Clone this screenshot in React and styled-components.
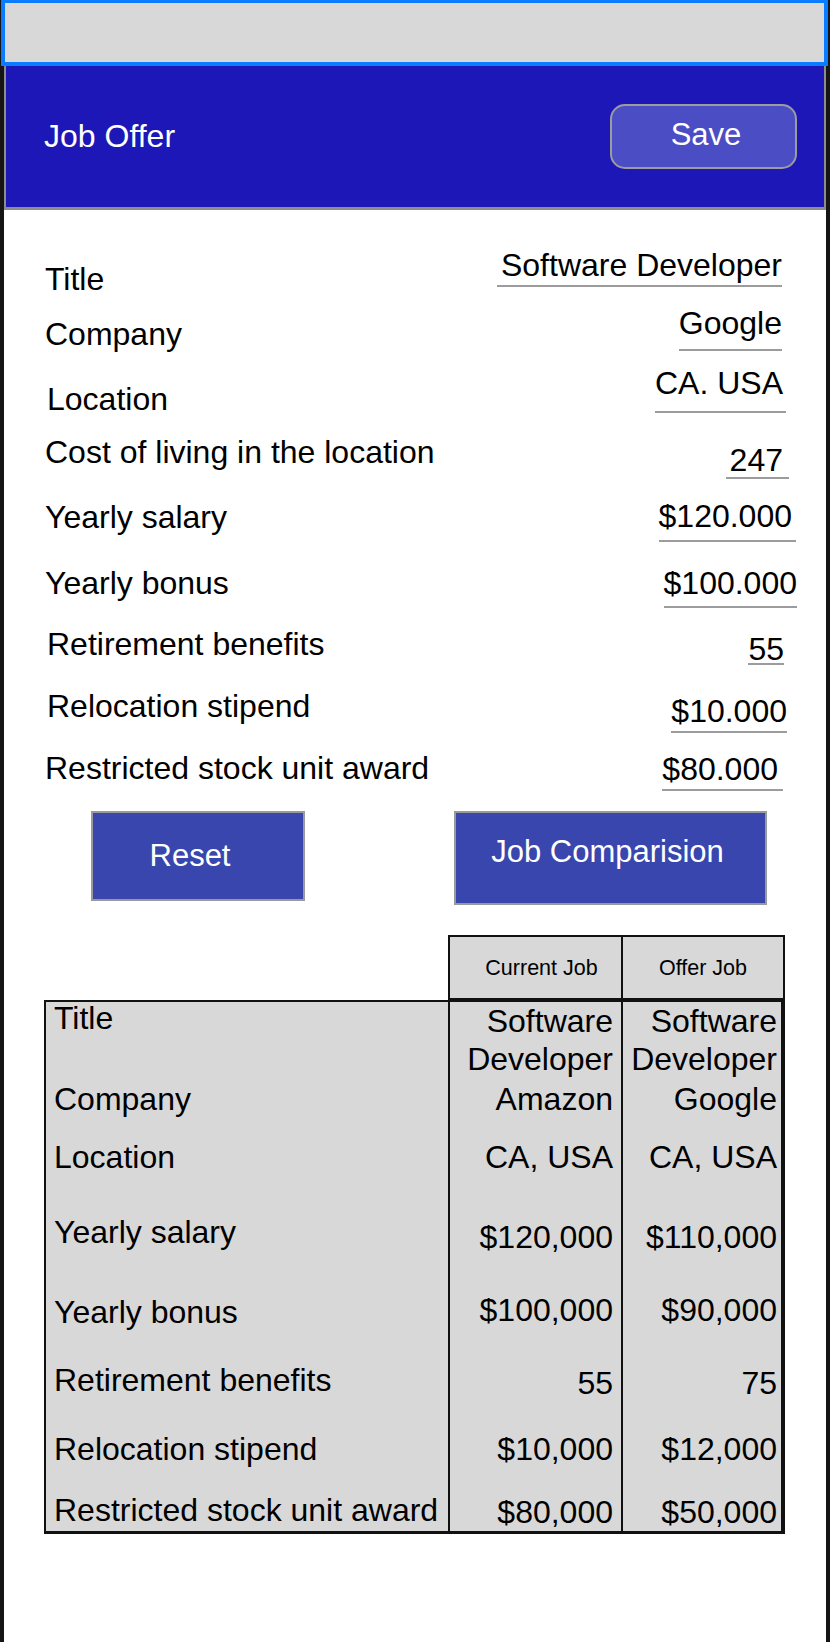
import React from 'react'
import styled, { createGlobalStyle } from 'styled-components'

const offer = [
  { label: 'Title', value: 'Software Developer', h: 58, lt: 12, vt: 0, pad: 6, pl: 4, pr: 0, mr: 16 },
  { label: 'Company', value: 'Google', h: 60, lt: 9, vt: 0, pad: 12, pl: 0, pr: 0, mr: 16 },
  { label: 'Location', value: 'CA. USA', h: 67, lt: 14, vt: 0, pad: 14, pl: 0, pr: 3, mr: 12, lx: 2 },
  { label: 'Cost of living in the location', value: '247', h: 65, lt: 0, vt: 10, pad: 3, pl: 4, pr: 6, mr: 9 },
  { label: 'Yearly salary', value: '$120.000', h: 66, lt: 0, vt: 1, pad: 10, pl: 0, pr: 4, mr: 2 },
  { label: 'Yearly bonus', value: '$100.000', h: 61, lt: 0, vt: 2, pad: 9, pl: 0, pr: 0, mr: 1 },
  { label: 'Retirement benefits', value: '55', h: 62, lt: 0, vt: 7, pad: 0, pl: 0, pr: 0, mr: 14, lx: 2 },
  { label: 'Relocation stipend', value: '$10.000', h: 62, lt: 0, vt: 7, pad: 6, pl: 0, pr: 0, mr: 11, lx: 2 },
  { label: 'Restricted stock unit award', value: '$80.000', lt: 0, vt: 3, pad: 6, pl: 0, pr: 5, mr: 15 },
]

const compare = [
  { label: 'Title', current: 'Software Developer', offer: 'Software Developer', h: 78, lt: 0, vt: 0 },
  { label: 'Company', current: 'Amazon', offer: 'Google', h: 58, lt: 0, vt: 0 },
  { label: 'Location', current: 'CA, USA', offer: 'CA, USA', h: 75, lt: 0, vt: 0 },
  { label: 'Yearly salary', current: '$120,000', offer: '$110,000', h: 78, lt: 0, vt: 5 },
  { label: 'Yearly bonus', current: '$100,000', offer: '$90,000', h: 70, lt: 2, vt: 0 },
  { label: 'Retirement benefits', current: '55', offer: '75', h: 69, lt: 0, vt: 3 },
  { label: 'Relocation stipend', current: '$10,000', offer: '$12,000', h: 61, lt: 0, vt: 0 },
  { label: 'Restricted stock unit award', current: '$80,000', offer: '$50,000', h: 40, lt: 0, vt: 2 },
]

export default function App() {
  return (
    <>
      <GlobalStyle />
      <Frame>
        <StatusBar />
        <Header>
          <HeaderTitle>Job Offer</HeaderTitle>
          <SaveButton>Save</SaveButton>
        </Header>
        <Form>
          {offer.map((row) => (
            <Row key={row.label} $h={row.h}>
              <Label $top={row.lt} $x={row.lx || 0}>{row.label}</Label>
              <Value $top={row.vt} $pad={row.pad} $pl={row.pl} $pr={row.pr} $mr={row.mr}>
                {row.value}
              </Value>
            </Row>
          ))}
        </Form>
        <Actions>
          <ActionButton $w={214} $h={90} $shift={16}>Reset</ActionButton>
          <ActionButton $w={313} $h={94} $lift={12} $shift={6}>Job Comparision</ActionButton>
        </Actions>
        <Table>
          <TableHead>
            <HeadCell $shift={12}>Current Job</HeadCell>
            <HeadCell $divider>Offer Job</HeadCell>
          </TableHead>
          <TableBody>
            {compare.map((row) => (
              <React.Fragment key={row.label}>
                <LabelCell $h={row.h} $top={row.lt}>{row.label}</LabelCell>
                <ValueCell $h={row.h} $top={row.vt} $pr={8}>{row.current}</ValueCell>
                <ValueCell $h={row.h} $top={row.vt} $pr={4}>{row.offer}</ValueCell>
              </React.Fragment>
            ))}
          </TableBody>
        </Table>
      </Frame>
    </>
  )
}

const GlobalStyle = createGlobalStyle`
  html, body {
    margin: 0;
    padding: 0;
    background: #151515;
  }
  body {
    font-family: "Liberation Sans", Arial, Helvetica, sans-serif;
    color: #000;
  }
  * {
    box-sizing: border-box;
  }
`

const Frame = styled.div`
  margin: 0 4px;
  min-height: 1642px;
  background: #fff;
  padding-bottom: 40px;
`

const StatusBar = styled.div`
  height: 66px;
  width: calc(100% + 5px);
  margin-left: -3px;
  background: #d8d8d8;
  border: 4px solid #0a7cff;
  border-top-width: 3px;
`

const Header = styled.header`
  height: 144px;
  background: #1c17b6;
  border: 2px solid #8c8c8c;
  border-top: none;
  border-bottom-width: 3px;
  display: flex;
  align-items: center;
  justify-content: space-between;
  padding: 0 27px 0 38px;
`

const HeaderTitle = styled.h1`
  margin: 0;
  font-size: 32px;
  font-weight: 400;
  color: #fff;
`

const SaveButton = styled.button`
  width: 187px;
  height: 65px;
  background: #4b4dc4;
  border: 2px solid #9c9c9c;
  border-radius: 15px;
  color: #fff;
  font-family: inherit;
  font-size: 31px;
  padding: 0 0 4px 5px;
`

const Form = styled.div`
  padding: 41px 28px 0 41px;
`

const Row = styled.div`
  display: flex;
  justify-content: space-between;
  align-items: flex-start;
  height: ${(p) => (p.$h ? `${p.$h}px` : 'auto')};
`

const Label = styled.span`
  margin-top: ${(p) => p.$top}px;
  margin-left: ${(p) => p.$x}px;
  font-size: 32px;
  line-height: 32px;
  white-space: nowrap;
`

const Value = styled.span`
  margin-top: ${(p) => p.$top}px;
  margin-right: ${(p) => p.$mr}px;
  padding: 0 ${(p) => p.$pr}px ${(p) => p.$pad}px ${(p) => p.$pl}px;
  border-bottom: 2px solid #9c9c9c;
  font-size: 32px;
  line-height: 28px;
  white-space: nowrap;
`

const Actions = styled.div`
  display: flex;
  align-items: flex-start;
  gap: 149px;
  margin-top: 20px;
  padding-left: 87px;
`

const ActionButton = styled.button`
  width: ${(p) => p.$w}px;
  height: ${(p) => p.$h}px;
  background: #3946ae;
  border: 2px solid #9a9a9a;
  color: #fff;
  font-family: inherit;
  font-size: 31px;
  padding: 0 ${(p) => p.$shift || 0}px ${(p) => p.$lift || 0}px 0;
`

const Table = styled.div`
  margin: 30px 0 0 40px;
  width: 741px;
`

const TableHead = styled.div`
  margin-left: 404px;
  height: 65px;
  display: grid;
  grid-template-columns: 171px 1fr;
  background: #d8d8d8;
  border: 2px solid #111;
`

const HeadCell = styled.div`
  display: flex;
  align-items: center;
  justify-content: center;
  font-size: 21.5px;
  padding: 2px 0 0 ${(p) => p.$shift || 0}px;
  border-left: ${(p) => (p.$divider ? '2px solid #111' : 'none')};
`

const TableBody = styled.div`
  display: grid;
  grid-template-columns: 402px 173px 1fr;
  background: #d8d8d8;
  border: 2px solid #111;
  border-right-width: 4px;
  border-bottom-width: 3px;
`

const LabelCell = styled.div`
  height: ${(p) => p.$h}px;
  padding: ${(p) => p.$top}px 0 0 8px;
  font-size: 32px;
  line-height: 38px;
  white-space: nowrap;
  &:first-child {
    margin-top: -3px;
  }
`

const ValueCell = styled.div`
  height: ${(p) => p.$h}px;
  padding: ${(p) => p.$top}px ${(p) => p.$pr}px 0 0;
  border-left: 2px solid #111;
  font-size: 32px;
  line-height: 38px;
  text-align: right;
`
